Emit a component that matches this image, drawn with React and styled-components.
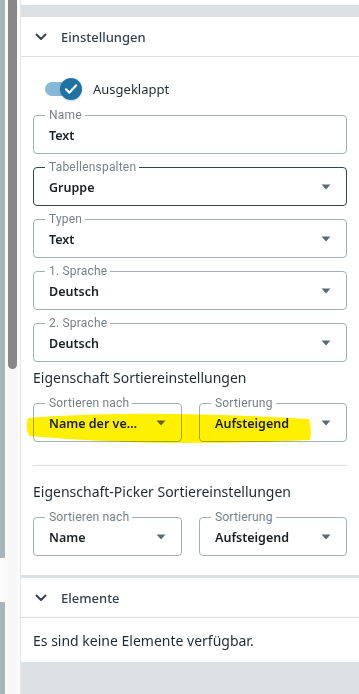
import React from "react";
import styled, { createGlobalStyle } from "styled-components";

const GlobalStyle = createGlobalStyle`
  html, body { margin: 0; padding: 0; background: #fff; }
  body { font-family: "Noto Sans", "DejaVu Sans", sans-serif; color: #1f2a33; }
  * { box-sizing: border-box; }
`;

const Page = styled.div`
  display: flex;
  width: 359px;
  height: 694px;
  overflow: hidden;
`;

const Rail = styled.div`
  display: flex;
  width: 20px;
  flex: none;
  background: #f8f8f8;
`;

const RailEdge = styled.div`
  width: 5px;
  display: flex;
  flex-direction: column;
`;

const EdgeSeg = styled.div`
  height: ${(p) => (p.$h ? `${p.$h}px` : "auto")};
  flex: ${(p) => (p.$h ? "none" : "1")};
  background: ${(p) => (p.$light ? "#fbfbfb" : "#a7b2b9")};
`;

const RailGap = styled.div`
  width: ${(p) => p.$w}px;
  background: #fafafa;
`;

const Track = styled.div`
  width: 9px;
  background: #f7f7f7;
`;

const Thumb = styled.div`
  height: 369px;
  background: #878787;
  border-radius: 0 0 5px 5px;
`;

const Panel = styled.div`
  flex: 1;
  display: flex;
  flex-direction: column;
  background: #dde1e4;
  border-left: 1px solid #e4e7e9;
  min-width: 0;
`;

const CardTail = styled.div`
  height: 5px;
  background: #fff;
  flex: none;
`;

const Card = styled.section`
  background: #fff;
  margin-top: ${(p) => p.$mt}px;
  flex: none;
`;

const CardHeader = styled.div`
  display: flex;
  align-items: center;
  height: 40px;
  padding: 1px 0 0 14px;
  gap: 14px;
  border-bottom: 1px solid #dcdfe2;
  font-size: 13px;
  font-weight: 500;
  color: #37434c;
`;

const CardBody = styled.div`
  padding: ${(p) => p.$pad};
  display: flex;
  flex-direction: column;
`;

const ToggleRow = styled.label`
  display: flex;
  align-items: center;
  gap: 11px;
  height: 22px;
  margin: 21px 0 0 12px;
  font-size: 13px;
  color: #1f2a33;
`;

const Switch = styled.span`
  position: relative;
  width: 37px;
  height: 22px;
  display: inline-flex;
  align-items: center;
`;

const SwitchTrack = styled.span`
  width: 26px;
  height: 14px;
  border-radius: 7px;
  background: #86b8d8;
`;

const Knob = styled.span`
  position: absolute;
  left: 15px;
  top: 0;
  width: 22px;
  height: 22px;
  border-radius: 50%;
  background: #1f72a2;
  display: flex;
  align-items: center;
  justify-content: center;
  box-shadow: 0 1px 2px rgba(0, 0, 0, 0.2);
`;

const Fields = styled.div`
  display: flex;
  flex-direction: column;
  gap: 13px;
  margin-top: 15px;
`;

const Box = styled.div`
  position: relative;
  height: 39px;
  border: 1px solid ${(p) => (p.$focus ? "#36424b" : "#a4aeb5")};
  border-radius: 4px;
  display: flex;
  align-items: center;
  padding: 0 15px 0 15px;
  gap: 14px;
  min-width: 0;
`;

const Legend = styled.span`
  position: absolute;
  left: 11px;
  top: -8px;
  padding: 0 3px 0 4px;
  background: #fff;
  font-family: Roboto, "Liberation Sans", sans-serif;
  font-size: 12px;
  letter-spacing: 0.2px;
  line-height: 14px;
  color: #76828a;
`;

const Value = styled.span`
  flex: 1;
  min-width: 0;
  font-size: 12.5px;
  font-weight: 600;
  color: #1b2025;
  white-space: nowrap;
  overflow: hidden;
  text-overflow: ellipsis;
  padding-top: 1px;
`;

const Heading = styled.div`
  font-size: 14px;
  line-height: 20px;
  color: #1f2a33;
  margin: ${(p) => p.$m};
`;

const SortRow = styled.div`
  position: relative;
  display: grid;
  grid-template-columns: 149px 148px;
  column-gap: 17px;
`;

const Divider = styled.hr`
  border: 0;
  border-top: 1px solid #dcdfe2;
  margin: 23px 0 0;
`;

const Highlight = styled.svg`
  position: absolute;
  left: -7px;
  top: 10px;
  overflow: visible;
  mix-blend-mode: multiply;
  pointer-events: none;
`;

const Empty = styled.div`
  height: 44px;
  display: flex;
  align-items: center;
  padding-left: 12px;
  font-size: 14px;
  color: #1f2a33;
`;

const Chevron = () => (
  <svg width="12" height="8" viewBox="0 0 12 8">
    <path d="M1.5 1.5 L6 6 L10.5 1.5" fill="none" stroke="#37434c" strokeWidth="2" strokeLinecap="round" strokeLinejoin="round" />
  </svg>
);

const Caret = () => (
  <svg width="10" height="6" viewBox="0 0 10 6">
    <path d="M0.5 0.5 L9.5 0.5 L5 5.5 Z" fill="#5d6a72" />
  </svg>
);

const Check = () => (
  <svg width="14" height="12" viewBox="0 0 14 12">
    <path d="M2 6.3 L5.4 9.6 L12 2.4" fill="none" stroke="#fff" strokeWidth="2.2" strokeLinecap="round" strokeLinejoin="round" />
  </svg>
);

const Field = ({ label, value, select, focus }) => (
  <Box $focus={focus}>
    <Legend>{label}</Legend>
    <Value>{value}</Value>
    {select && <Caret />}
  </Box>
);

export default function App() {
  return (
    <>
      <GlobalStyle />
      <Page>
        <Rail>
          <RailEdge>
            <EdgeSeg $h={558} />
            <EdgeSeg $h={44} $light />
            <EdgeSeg />
          </RailEdge>
          <RailGap $w={3} />
          <Track>
            <Thumb />
          </Track>
          <RailGap $w={3} />
        </Rail>
        <Panel>
          <CardTail />
          <Card $mt={12}>
            <CardHeader>
              <Chevron />
              <span>Einstellungen</span>
            </CardHeader>
            <CardBody $pad="0 12px 19px 12px">
              <ToggleRow>
                <Switch>
                  <SwitchTrack />
                  <Knob>
                    <Check />
                  </Knob>
                </Switch>
                Ausgeklappt
              </ToggleRow>
              <Fields>
                <Field label="Name" value="Text" />
                <Field label="Tabellenspalten" value="Gruppe" select focus />
                <Field label="Typen" value="Text" select />
                <Field label="1. Sprache" value="Deutsch" select />
                <Field label="2. Sprache" value="Deutsch" select />
              </Fields>
              <Heading $m="6px 0 15px">Eigenschaft Sortiereinstellungen</Heading>
              <SortRow>
                <Field label="Sortieren nach" value="Name der vertikalen Eigenschaft" select />
                <Field label="Sortierung" value="Aufsteigend" select />
                <Highlight width="290" height="30" viewBox="0 0 290 30">
                  <path
                    d="M2 5 Q70 0 150 1 Q220 2 283 6 Q286 16 284 27 Q220 30 150 30 Q70 29 3 23 Q-1 14 2 5 Z"
                    fill="#fff000"
                  />
                </Highlight>
              </SortRow>
              <Divider />
              <Heading $m="16px 0 15px">Eigenschaft-Picker Sortiereinstellungen</Heading>
              <SortRow>
                <Field label="Sortieren nach" value="Name" select />
                <Field label="Sortierung" value="Aufsteigend" select />
              </SortRow>
            </CardBody>
          </Card>
          <Card $mt={3}>
            <CardHeader>
              <Chevron />
              <span>Elemente</span>
            </CardHeader>
            <Empty>Es sind keine Elemente verfügbar.</Empty>
          </Card>
        </Panel>
      </Page>
    </>
  );
}
